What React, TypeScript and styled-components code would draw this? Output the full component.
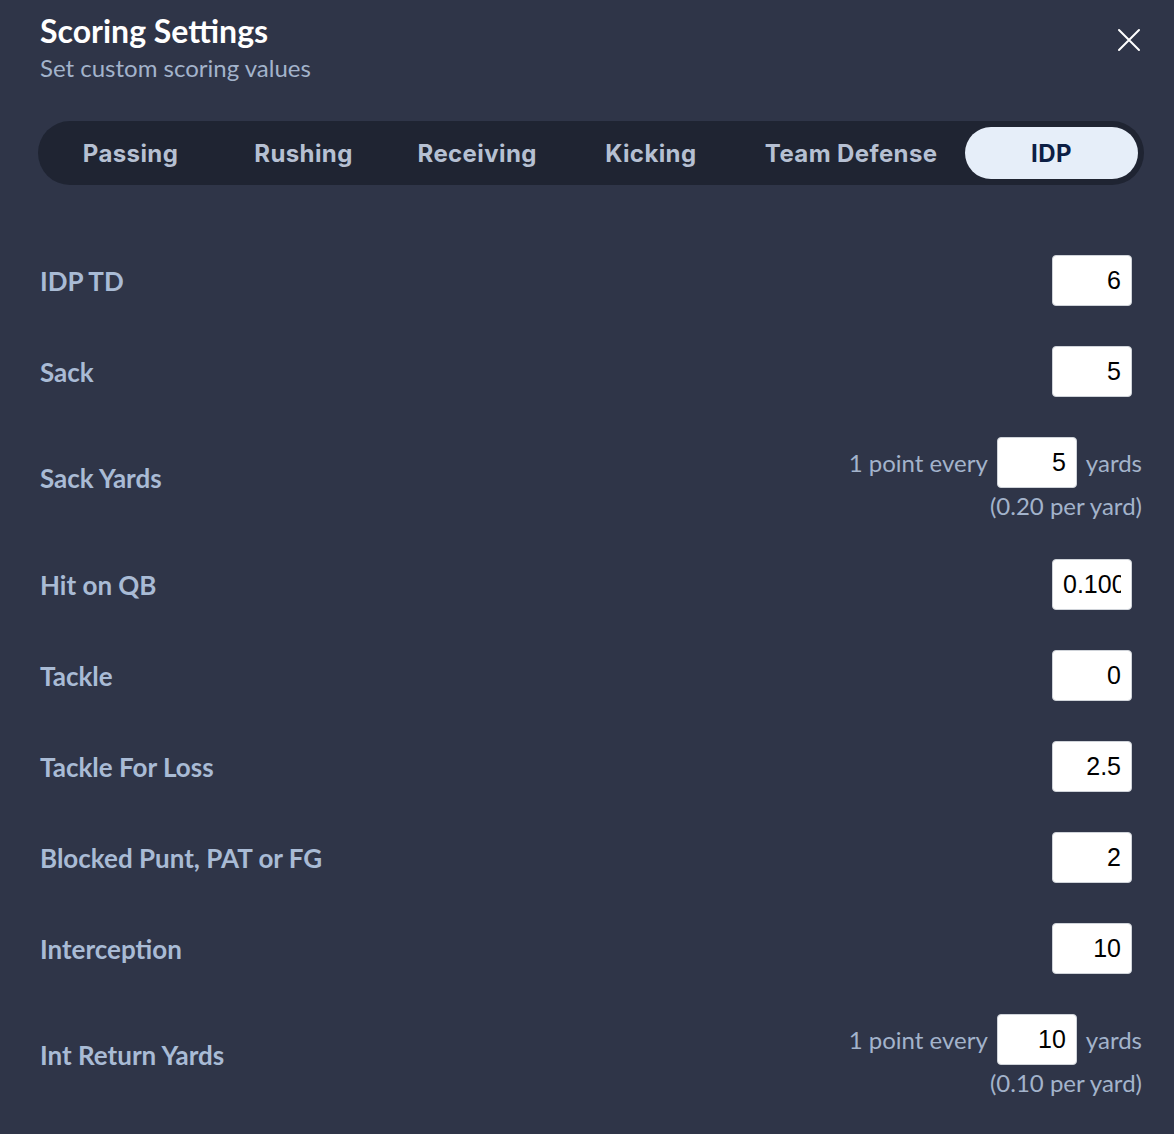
import styled, { createGlobalStyle } from 'styled-components';
import { useState } from 'react';

const TABS = ['Passing', 'Rushing', 'Receiving', 'Kicking', 'Team Defense', 'IDP'];

type TRule = {
  label: string;
  value: string;
  per?: string;
};

const RULES: TRule[] = [
  { label: 'IDP TD', value: '6' },
  { label: 'Sack', value: '5' },
  { label: 'Sack Yards', value: '5', per: 'yard' },
  { label: 'Hit on QB', value: '0.1000' },
  { label: 'Tackle', value: '0' },
  { label: 'Tackle For Loss', value: '2.5' },
  { label: 'Blocked Punt, PAT or FG', value: '2' },
  { label: 'Interception', value: '10' },
  { label: 'Int Return Yards', value: '10', per: 'yard' },
];

const GlobalStyle = createGlobalStyle`
  html, body {
    margin: 0;
    padding: 0;
    background: #2f3548;
  }
  * {
    box-sizing: border-box;
  }
`;

const App = () => {
  const [active, setActive] = useState('IDP');
  const [values, setValues] = useState<string[]>(RULES.map(r => r.value));

  const handleChange = (i: number, v: string) => {
    const next = [...values];
    next[i] = v;
    setValues(next);
  };

  return (
    <>
      <GlobalStyle />
      <Modal>
        <Header>
          <div>
            <Title>Scoring Settings</Title>
            <Subtitle>Set custom scoring values</Subtitle>
          </div>
          <Close aria-label='close'>
            <svg width='24' height='24' viewBox='0 0 24 24' fill='none'>
              <path d='M2 2L22 22M22 2L2 22' stroke='#ffffff' strokeWidth='2' strokeLinecap='round' />
            </svg>
          </Close>
        </Header>

        <TabBar>
          {TABS.map(tab => (
            <Tab key={tab} $active={tab === active} onClick={() => setActive(tab)}>
              {tab}
            </Tab>
          ))}
        </TabBar>

        <Rows>
          {RULES.map((rule, i) => {
            const n = parseFloat(values[i]) || 0;
            return (
              <Row key={rule.label}>
                <Label>{rule.label}</Label>
                {rule.per ? (
                  <PerUnit>
                    <PerLine>
                      <Hint>1 point every</Hint>
                      <ValueInput value={values[i]} onChange={e => handleChange(i, e.target.value)} />
                      <Hint>yards</Hint>
                    </PerLine>
                    <Hint>({n ? (1 / n).toFixed(2) : '0.00'} per {rule.per})</Hint>
                  </PerUnit>
                ) : (
                  <Single>
                    <ValueInput value={values[i]} onChange={e => handleChange(i, e.target.value)} />
                  </Single>
                )}
              </Row>
            );
          })}
        </Rows>
      </Modal>
    </>
  );
};

const Modal = styled.div`
  width: 1174px;
  min-height: 1134px;
  padding: 12px 30px 0 40px;
  background: #2f3548;
  font-family: Lato, 'Open Sans', sans-serif;
`;

const Header = styled.div`
  display: flex;
  justify-content: space-between;
  align-items: flex-start;
`;

const Title = styled.h1`
  margin: 0;
  font-size: 32px;
  line-height: 38px;
  font-weight: 700;
  color: #ffffff;
`;

const Subtitle = styled.p`
  margin: 3px 0 0;
  font-size: 24px;
  line-height: 30px;
  font-weight: 400;
  color: #a3b3cb;
`;

const Close = styled.button`
  margin: 16px 3px 0 0;
  padding: 0;
  width: 24px;
  height: 24px;
  border: none;
  background: transparent;
  cursor: pointer;
  display: flex;
`;

const TabBar = styled.div`
  margin: 38px 0 0 -2px;
  height: 64px;
  padding: 6px;
  border-radius: 32px;
  background: #1f2432;
  display: flex;
  align-items: stretch;
`;

const Tab = styled.button<{ $active?: boolean }>`
  flex: 1 0 auto;
  min-width: 173px;
  padding: 0 26px;
  border: none;
  border-radius: 26px;
  font-family: Inter, 'DejaVu Sans', sans-serif;
  font-size: 24px;
  font-weight: 700;
  letter-spacing: 0.4px;
  cursor: pointer;
  background: ${p => (p.$active ? '#e6eef9' : 'transparent')};
  color: ${p => (p.$active ? '#0d1f45' : '#b6c0d2')};
`;

const Rows = styled.div`
  margin-top: 50px;
  display: flex;
  flex-direction: column;
`;

const Row = styled.div`
  display: flex;
  justify-content: space-between;
  align-items: center;
  padding: 20px 2px 20px 0;
`;

const Label = styled.span`
  font-size: 26px;
  font-weight: 700;
  color: #a9bbd5;
`;

const Single = styled.div`
  margin-right: 10px;
  display: flex;
`;

const PerUnit = styled.div`
  display: flex;
  flex-direction: column;
  align-items: flex-end;
  gap: 5px;
`;

const PerLine = styled.div`
  display: flex;
  align-items: center;
  gap: 9px;
`;

const Hint = styled.span`
  font-size: 24px;
  line-height: 26px;
  color: #a3b3cb;
`;

const ValueInput = styled.input`
  width: 80px;
  height: 51px;
  padding: 0 10px 0 10px;
  border: 1px solid #cfd3d9;
  border-radius: 4px;
  background: #ffffff;
  font-family: 'Liberation Sans', Arial, sans-serif;
  font-size: 25px;
  color: #000000;
  text-align: right;
  outline: none;
`;

export default App;
